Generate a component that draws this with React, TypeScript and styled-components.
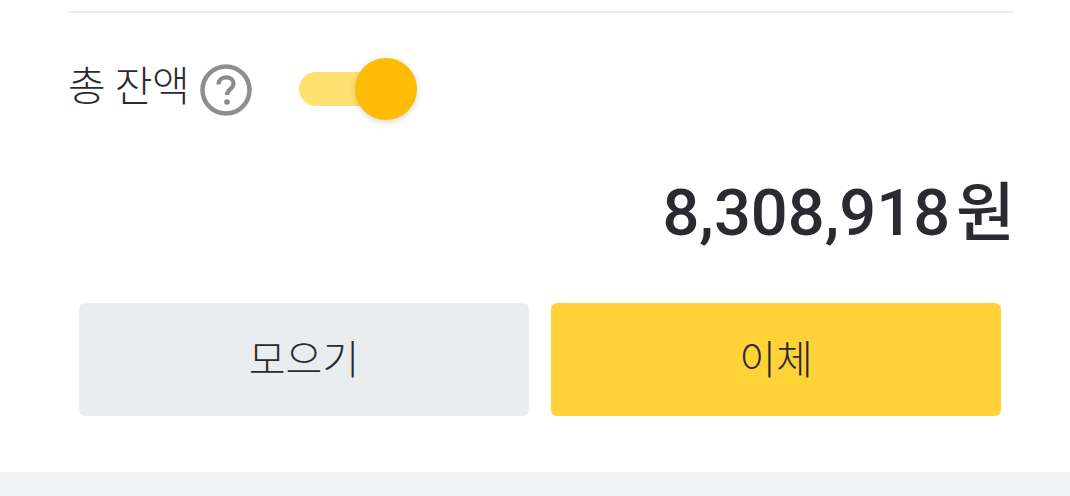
import styled, { createGlobalStyle } from "styled-components";

const GlobalStyle = createGlobalStyle`
  html, body {
    margin: 0;
    padding: 0;
    background: #fff;
  }
  body {
    font-family: Roboto, "Noto Sans CJK KR", sans-serif;
    color: #2a2b30;
  }
`;

function App() {
  return (
    <>
      <GlobalStyle />
      <Page>
        <Card>
          <Divider />
          <BalanceRow>
            <BalanceLabel>총 잔액</BalanceLabel>
            <HelpIcon viewBox="0 0 52 52" aria-hidden="true">
              <circle cx="26" cy="26" r="23.5" fill="none" stroke="#8e8e8e" strokeWidth="4.5" />
              <path
                d="M18.500 20.500c0-4.200 3.200-7.200 7.700-7.200 4.300 0 7.300 2.600 7.300 6.200 0 5.500-6.500 5.700-6.500 11.500"
                fill="none"
                stroke="#8a8a8a"
                strokeWidth="4.200"
              />
              <circle cx="27" cy="38" r="2.800" fill="#8a8a8a" />
            </HelpIcon>
            <Toggle>
              <ToggleKnob />
            </Toggle>
          </BalanceRow>
          <Amount>
            8,308,918<AmountUnit>원</AmountUnit>
          </Amount>
          <Buttons>
            <ActionButton>모으기</ActionButton>
            <ActionButton $primary>이체</ActionButton>
          </Buttons>
        </Card>
        <FooterBand />
      </Page>
    </>
  );
}

const Page = styled.div`
  width: 1070px;
  height: 496px;
  overflow: hidden;
  display: flex;
  flex-direction: column;
`;

const Card = styled.div`
  height: 472px;
  padding: 11px 57px 0 68px;
  box-sizing: border-box;
`;

const Divider = styled.div`
  height: 2px;
  background: #e9ecee;
`;

const BalanceRow = styled.div`
  display: flex;
  align-items: center;
  height: 62px;
  margin-top: 45px;
`;

const BalanceLabel = styled.span`
  font-size: 41px;
  line-height: 62px;
  font-weight: 300;
  letter-spacing: -0.5px;
  position: relative;
  top: -2px;
`;

const HelpIcon = styled.svg`
  width: 52px;
  height: 52px;
  margin-left: 11px;
  position: relative;
  top: 1px;
`;

const Toggle = styled.div`
  position: relative;
  width: 84px;
  height: 34px;
  margin-left: 47px;
  border-radius: 17px;
  background: #ffe171;
`;

const ToggleKnob = styled.div`
  position: absolute;
  top: -14px;
  right: -34px;
  width: 62px;
  height: 62px;
  border-radius: 50%;
  background: #ffbc05;
  box-shadow: 0 2px 6px rgba(0, 0, 0, 0.16);
`;

const Amount = styled.div`
  margin-top: 53px;
  margin-right: -2px;
  font-size: 65px;
  line-height: 80px;
  font-weight: 500;
  text-align: right;
`;

const AmountUnit = styled.span`
  margin-left: 6px;
  font-size: 64px;
`;

const Buttons = styled.div`
  display: flex;
  gap: 22px;
  margin: 49px 12px 0 11px;
`;

const ActionButton = styled.button<{ $primary?: boolean }>`
  flex: 1;
  height: 113px;
  border: 0;
  border-radius: 6px;
  padding: 0 0 5px;
  background: ${({ $primary }) => ($primary ? "#ffd338" : "#e9edf0")};
  color: #2a2b30;
  font-family: inherit;
  font-size: 40px;
  font-weight: 300;
`;

const FooterBand = styled.div`
  flex: 1;
  background: #f1f2f4;
`;

export default App;
